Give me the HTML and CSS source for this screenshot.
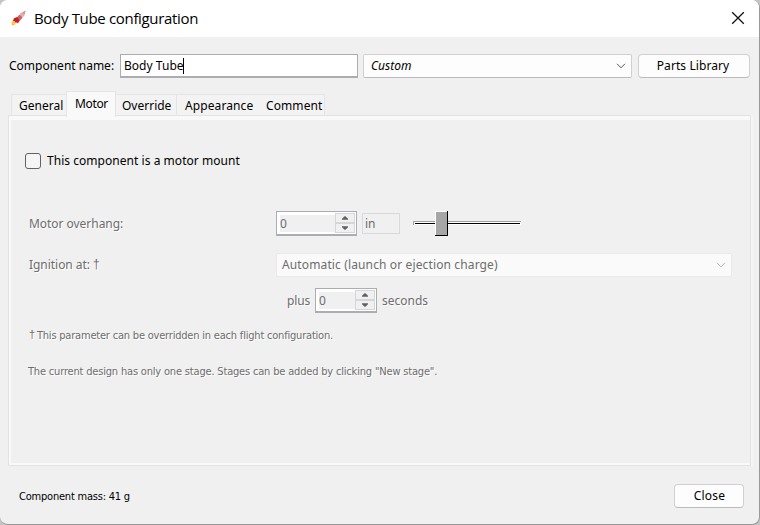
FILE: index.html
```html
<!DOCTYPE html>
<html lang="en">
<head>
<meta charset="utf-8">
<title>Body Tube configuration</title>
<link rel="stylesheet" href="styles.css">
</head>
<body>
<div class="window">
  <header class="titlebar">
    <svg class="rocket" width="16" height="16" viewBox="0 0 16 16">
      <path d="M14.5 .8 10 2.7 6 7.8l2.8 2.8 4.6-5z" fill="#e5adad"/>
      <path d="M8.5 4.7 5 8.4l3 3.4 3.4-4.4z" fill="#d06060"/>
      <path d="M6.2 7 3 8.2 1.9 11l2 .2.4 1.6 1.7-.3L7 13.4l1.4-2.8z" fill="#c4201c"/>
      <path d="m14.8.5-3 2.2 1.4 1.6z" fill="#d98080"/>
      <path d="m.6 11.7 2-.6 1.9 1.5-.4 1.9L.9 15.4z" fill="#ffb62e"/>
      <path d="m1.4 12.6 1.6-.2.5 1.2-1.5 1z" fill="#ffdc3c"/>
    </svg>
    <h1 class="title">Body Tube configuration</h1>
    <svg class="x" width="14" height="14" viewBox="0 0 14 14"><path d="m1.2 1.2 11.6 11.6m0-11.6L1.2 12.8" fill="none" stroke="#111" stroke-width="1.3"/></svg>
  </header>

  <div class="namebar">
    <label class="namelabel">Component name:</label>
    <div class="namefield">Body Tube<i class="caret"></i></div>
    <div class="combo preset"><em>Custom</em>
      <svg width="10" height="6" viewBox="0 0 10 6"><path d="m1 .8 4 4 4-4" fill="none" stroke="#555"/></svg>
    </div>
    <button class="button library">Parts Library</button>
  </div>

  <nav class="tabs">
    <div class="tab general">General</div>
    <div class="tab active">Motor</div>
    <div class="tab override">Override</div>
    <div class="tab appearance">Appearance</div>
    <div class="tab comment">Comment</div>
  </nav>

  <main class="panel">
    <label class="mount"><span class="check"></span>This component is a motor mount</label>
    <div class="row overhang">
      <span class="rowlabel">Motor overhang:</span>
      <div class="spinner">
        <span class="value">0</span>
        <span class="steps">
          <span class="step"><svg width="7" height="4" viewBox="0 0 7 4"><path d="M0 4V3l3-3h1l3 3v1z"/></svg></span>
          <span class="step"><svg width="7" height="4" viewBox="0 0 7 4"><path d="M0 0v1l3 3h1l3-3V0z"/></svg></span>
        </span>
      </div>
      <div class="unit">in</div>
      <div class="slider"><span class="track"></span><span class="thumb"></span></div>
    </div>
    <div class="row ignition">
      <span class="rowlabel">Ignition at: <span class="dagger">†</span></span>
      <div class="combo event"><span>Automatic (launch or ejection charge)</span>
        <svg width="10" height="6" viewBox="0 0 10 6"><path d="m1 .8 4 4 4-4" fill="none" stroke="#b0b0b0"/></svg>
      </div>
    </div>
    <div class="row delay">
      <span class="plus">plus</span>
      <div class="spinner short">
        <span class="value">0</span>
        <span class="steps">
          <span class="step"><svg width="7" height="4" viewBox="0 0 7 4"><path d="M0 4V3l3-3h1l3 3v1z"/></svg></span>
          <span class="step"><svg width="7" height="4" viewBox="0 0 7 4"><path d="M0 0v1l3 3h1l3-3V0z"/></svg></span>
        </span>
      </div>
      <span>seconds</span>
    </div>
    <p class="note override-note"><span class="dagger">†</span>This parameter can be overridden in each flight configuration.</p>
    <p class="note stage-note">The current design has only one stage. Stages can be added by clicking "New stage".</p>
  </main>

  <footer class="footer">
    <span class="mass">Component mass: 41 g</span>
    <button class="button close">Close</button>
  </footer>
</div>
</body>
</html>
```
FILE: styles.css
```css
* { box-sizing: border-box; }
body {
  margin: 0;
  background: #c4c4c4;
  font: 12px/16px "Noto Sans", sans-serif;
  color: #000;
}
.window {
  width: 760px;
  height: 525px;
  display: flex;
  flex-direction: column;
  overflow: hidden;
  background: #f0f0f0;
  border-right: 1px solid #999;
  border-bottom: 1px solid #999;
  border-radius: 8px;
  white-space: nowrap;
}
.titlebar {
  flex: none;
  height: 37px;
  display: flex;
  align-items: center;
  padding: 0 14px 0 11px;
  background: #fff;
}
.rocket { margin: 0 7px 1px 0; }
.title {
  flex: 1;
  margin: 0 0 2px;
  font: 15px/20px "Open Sans", sans-serif;
  letter-spacing: -.33px;
}
.x { margin-bottom: 1px; }
.namebar {
  flex: none;
  display: flex;
  height: 24px;
  margin-top: 17px;
  padding-left: 9px;
  line-height: 22px;
}
.namelabel { width: 111px; padding-top: 1px; }
.namefield {
  display: flex;
  align-items: center;
  width: 238px;
  padding-left: 3px;
  background: #fff;
  border: 1px solid #abadb3;
  border-bottom-width: 2px;
  letter-spacing: .03px;
}
.caret { width: 1px; height: 16px; margin-left: -1px; background: #000; }
.combo {
  display: flex;
  align-items: center;
  justify-content: space-between;
  background: #fdfdfd;
  border: 1px solid #d0d0d0;
  border-bottom-color: #bbb;
  border-radius: 2px;
}
.preset { width: 269px; margin-left: 5px; padding: 0 5px 0 7px; }
.button {
  height: 24px;
  padding: 0;
  background: #fdfdfd;
  border: 1px solid #d0d0d0;
  border-bottom-color: #bbb;
  border-radius: 4px;
  font: inherit;
  line-height: 20px;
  color: #000;
}
.library { width: 112px; margin-left: 6px; padding-right: 2px; letter-spacing: .08px; }

.tabs {
  flex: none;
  position: relative;
  z-index: 1;
  display: flex;
  align-items: flex-end;
  height: 26px;
  margin: 13px 0 -2px 11px;
}
.tab {
  height: 21px;
  margin-bottom: 2px;
  padding-top: 3px;
  background: #f3f3f3;
  border-top: 1px solid #e5e5e5;
  line-height: 16px;
}
.general { width: 55px; padding-left: 7px; border-left: 1px solid #e5e5e5; }
.active {
  width: 50px;
  height: 26px;
  margin-bottom: 0;
  padding-left: 8px;
  background: #f9f9f9;
  border: 1px solid #e5e5e5;
  border-bottom: 0;
  letter-spacing: -.35px;
}
.active { padding-top: 4px; }
.override { width: 61px; padding-left: 6px; border-right: 1px solid #e5e5e5; }
.appearance { width: 84px; padding-left: 8px; letter-spacing: .1px; }
.comment { width: 64px; padding-left: 5px; border-right: 1px solid #e5e5e5; letter-spacing: .1px; }

.panel {
  flex: none;
  height: 351px;
  width: 743px;
  margin-left: 8px;
  padding: 32px 0 0 14px;
  border: 1px solid #e3e3e3;
  box-shadow: inset 2px 0 #f9f9f9, inset 0 4px #f9f9f9, inset 0 -2px #f9f9f9, 2px 0 #f5f5f5;
  color: #6d6d6d;
  text-shadow: 1px 1px #fff;
}
.mount {
  display: flex;
  align-items: center;
  height: 26px;
  margin-left: 2px;
  letter-spacing: .04px;
  color: #000;
  text-shadow: none;
}
.check {
  width: 16px;
  height: 16px;
  margin-right: 6px;
  background: #f5f5f5;
  border: 1px solid #626262;
  border-radius: 3px;
}
.row { display: flex; align-items: center; padding-left: 6px; }
.rowlabel { width: 247px; letter-spacing: -.04px; }
.overhang { height: 25px; margin-top: 37px; }
.spinner {
  display: flex;
  width: 81px;
  height: 25px;
  padding: 1px;
  background: #fff;
  border: 1px solid #abadb3;
  border-bottom-width: 2px;
  text-shadow: none;
}
.value {
  flex: 1;
  margin: 2px 0 1px 2px;
  background: #f0f0f0;
  line-height: 18px;
}
.steps { width: 20px; display: flex; flex-direction: column; }
.step {
  flex: 1;
  display: flex;
  align-items: center;
  justify-content: center;
  background: #f0f0f0;
  border: 1px solid #d6d6d6;
}
.step svg { width: 6px; fill: #606060; }
.unit {
  width: 38px;
  height: 21px;
  margin-left: 5px;
  padding-left: 2px;
  border: 1px solid #d9d9d9;
  line-height: 19px;
  text-shadow: none;
}
.slider { position: relative; width: 109px; height: 25px; margin-left: 13px; }
.track {
  position: absolute;
  left: 0;
  top: 10px;
  width: 108px;
  height: 4px;
  background: #fff;
  border-top: 1px solid #a0a0a0;
  border-left: 1px solid #a0a0a0;
}
.track::after {
  content: "";
  position: absolute;
  left: 1px;
  right: 1px;
  top: 1px;
  height: 1px;
  background: #000;
}
.thumb {
  position: absolute;
  left: 22px;
  top: 0;
  width: 13px;
  height: 25px;
  background: #a6a6a6;
  border: solid #000;
  border-width: 0 1px 1px 0;
  box-shadow: inset 1px 1px #fff;
}
.ignition { height: 24px; margin-top: 17px; }
.dagger { position: relative; top: -1px; font-family: "Liberation Sans", sans-serif; }
.event {
  width: 456px;
  height: 24px;
  padding: 0 5px;
  background: #fafafa;
  border-color: #e9e9e9;
  letter-spacing: .13px;
  text-shadow: none;
}
.delay { height: 25px; margin-top: 11px; }
.plus { width: 28px; margin-left: 258px; letter-spacing: -.15px; }
.short { width: 62px; margin-right: 5px; }
.note {
  margin: 0;
  padding-left: 5px;
  font: 11px/16px "DejaVu Sans Condensed", sans-serif;
}
.override-note { margin-top: 14px; letter-spacing: -.2px; }
.override-note .dagger { margin: 0 2px 0 1px; }
.stage-note { margin-top: 20px; letter-spacing: -.18px; }

.footer {
  display: flex;
  align-items: center;
  justify-content: space-between;
  margin-top: 18px;
  padding: 0 15px 0 19px;
}
.mass { padding-top: 2px; font: 11px/16px "DejaVu Sans Condensed", sans-serif; letter-spacing: -.21px; }
.close { width: 70px; padding-left: 1px; letter-spacing: .2px; }
```
